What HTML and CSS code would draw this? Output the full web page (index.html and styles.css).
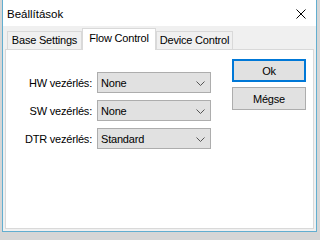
FILE: index.html
```html
<!DOCTYPE html>
<html>
<head>
<meta charset="utf-8">
<title>Beállítások</title>
<link rel="stylesheet" href="styles.css">
</head>
<body>
<div class="window">
  <div class="titlebar">
    <span class="title">Beállítások</span>
    <svg class="close" width="10" height="10" viewBox="0 0 10 10"><path d="M0.5 0.5 L9.5 9.5 M9.5 0.5 L0.5 9.5" stroke="#000" stroke-width="1" fill="none"/></svg>
  </div>
  <div class="client">
    <div class="tabs">
      <div class="tab tab-base">Base Settings</div>
      <div class="tab tab-flow active">Flow Control</div>
      <div class="tab tab-device">Device Control</div>
    </div>
    <div class="panel">
      <div class="form">
        <span class="lbl">HW vezérlés:</span>
        <div class="combo"><span>None</span><svg class="chev" width="9" height="5" viewBox="0 0 9 5"><path d="M0.5 0.5 L4.5 4.5 L8.5 0.5" stroke="#555" stroke-width="1" fill="none"/></svg></div>
        <span class="lbl">SW vezérlés:</span>
        <div class="combo"><span>None</span><svg class="chev" width="9" height="5" viewBox="0 0 9 5"><path d="M0.5 0.5 L4.5 4.5 L8.5 0.5" stroke="#555" stroke-width="1" fill="none"/></svg></div>
        <span class="lbl">DTR vezérlés:</span>
        <div class="combo"><span>Standard</span><svg class="chev" width="9" height="5" viewBox="0 0 9 5"><path d="M0.5 0.5 L4.5 4.5 L8.5 0.5" stroke="#555" stroke-width="1" fill="none"/></svg></div>
      </div>
      <div class="buttons">
        <div class="btn btn-default">Ok</div>
        <div class="btn">Mégse</div>
      </div>
    </div>
  </div>
</div>
</body>
</html>
```

FILE: styles.css
```css
html, body {
  margin: 0;
  padding: 0;
}
body {
  width: 320px;
  height: 235px;
  overflow: hidden;
  background: #d6d6d6;
  font-family: "Liberation Sans", Arial, sans-serif;
  font-size: 11px;
  letter-spacing: -0.2px;
  color: #000;
}
.window {
  margin-left: 2px;
  width: 313px;
  height: 231px;
  border: 1px solid #62aed0;
  border-top: none;
  display: flex;
  flex-direction: column;
  background: #f0f0f0;
}
.titlebar {
  height: 26px;
  flex: none;
  background: #fff;
  display: flex;
  align-items: center;
  justify-content: space-between;
  padding-left: 4px;
}
.title {
  font-size: 11.5px;
  letter-spacing: 0;
  margin-top: 1px;
}
.close {
  margin-right: 10px;
  margin-top: 1px;
}
.client {
  flex: 1;
  display: flex;
  flex-direction: column;
  padding: 0 2px 2px 2px;
}
.tabs {
  flex: none;
  display: flex;
  align-items: flex-end;
  padding-top: 2px;
  padding-left: 2px;
  height: 21px;
}
.tab {
  box-sizing: border-box;
  height: 18px;
  border: 1px solid #d9d9d9;
  border-bottom: none;
  background: #f0f0f0;
  text-align: center;
  line-height: 17px;
  white-space: nowrap;
}
.tab-base { width: 75px; }
.tab-flow { width: 74px; }
.tab-device { width: 77px; }
.tab.active {
  position: relative;
  z-index: 1;
  height: 22px;
  margin-bottom: -1px;
  background: #fff;
  line-height: 19px;
}
.panel {
  flex: 1;
  background: #fff;
  border: 1px solid #d9d9d9;
  display: flex;
  align-items: flex-start;
  padding-top: 9px;
}
.form {
  margin-top: 13px;
  display: grid;
  grid-template-columns: 86px 114px;
  column-gap: 5px;
  row-gap: 7px;
  align-items: center;
}
.lbl {
  text-align: right;
  white-space: nowrap;
}
.combo {
  box-sizing: border-box;
  height: 21px;
  background: #e1e1e1;
  border: 1px solid #adadad;
  display: flex;
  align-items: center;
  justify-content: space-between;
  padding: 0 5px 0 3px;
}
.chev {
  margin-top: 1px;
}
.buttons {
  margin-left: 21px;
  display: flex;
  flex-direction: column;
  gap: 5px;
}
.btn {
  box-sizing: border-box;
  width: 74px;
  height: 23px;
  background: #e1e1e1;
  border: 1px solid #adadad;
  display: flex;
  align-items: center;
  justify-content: center;
}
.btn-default {
  border: 2px solid #0078d7;
}
```
